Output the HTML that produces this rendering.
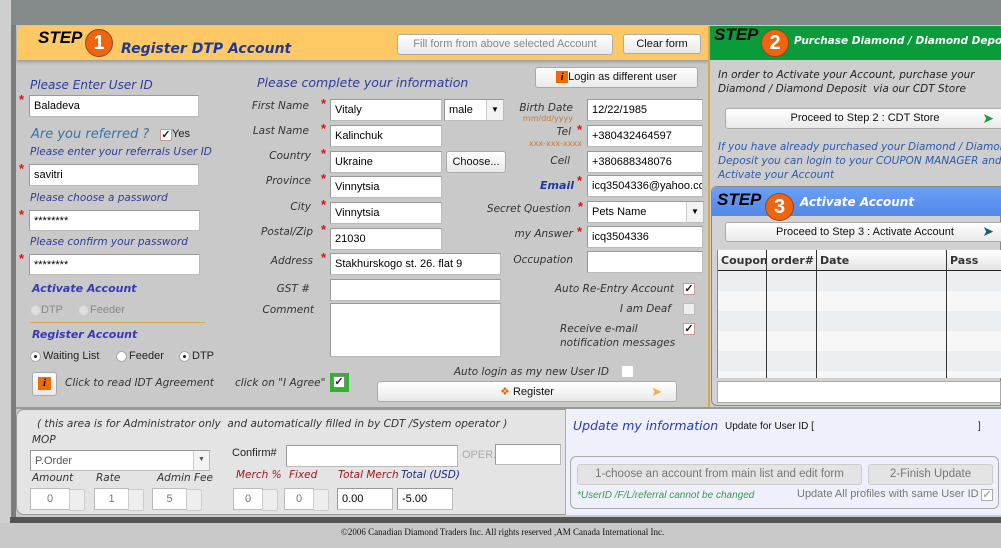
<!DOCTYPE html>
<html><head><meta charset="utf-8"><style>
*{box-sizing:border-box;margin:0;padding:0}
body{width:1001px;height:548px;position:relative;overflow:hidden;background:#c9c9c9;font-family:"Liberation Sans",sans-serif;font-size:11px;color:#222}
.a{position:absolute;white-space:nowrap}
.lb{position:absolute;white-space:nowrap;font-family:"DejaVu Sans",sans-serif;font-style:italic;font-size:10.5px;color:#333;text-align:right}
.in{position:absolute;background:#fff;border:1px solid #bbb;border-top-color:#999;border-left-color:#999;height:22px;font-size:11px;padding:4px 0 0 4px;color:#000;white-space:nowrap;overflow:hidden}
.st{position:absolute;color:#e01010;font-size:13px;font-weight:bold}
.btn{position:absolute;background:linear-gradient(#fff,#e9e9e9);border:1px solid #aaa;border-radius:3px;font-size:11px;text-align:center;padding-top:3px;color:#111;white-space:nowrap}
.bl{color:#2d3d9a;font-family:"DejaVu Sans",sans-serif;font-style:italic}
.cb{position:absolute;width:12px;height:12px;background:#fff;border:1px solid #c99;font-size:11px;line-height:10px;text-align:center;font-weight:bold;color:#222}
.rd{position:absolute;width:11px;height:11px;border-radius:50%;background:#fff;border:1px solid #aaa}
.rd.on::after{content:"";position:absolute;left:3px;top:3px;width:3px;height:3px;border-radius:50%;background:#222}
.circ{position:absolute;width:28px;height:28px;border-radius:50%;background:#f0640f;border:1px solid #8a4a20;color:#fff;font:bold 20px "Liberation Sans";text-align:center;line-height:27px}
.stp{position:absolute;font:italic bold 17px "Liberation Sans";color:#000}
.sp{position:absolute;width:28px;height:22px;background:#fff;border:1px solid #bbb;color:#777;text-align:center;padding-top:4px;font-size:11px}
.sp::after{content:"";position:absolute;right:-16px;top:0;width:14px;height:20px;background:#eee;border:1px solid #ccc;border-radius:2px}
</style></head><body>
<div class="a" style="left:0;top:0;width:1001px;height:25px;background:#858a8b"></div>
<div class="a" style="left:0;top:0;width:11px;height:548px;background:#cfcfcf"></div>
<div class="a" style="left:11px;top:25px;width:5px;height:498px;background:#7b7d7e"></div>
<div class="a" style="left:17px;top:26px;width:692px;height:34px;background:#fec965;border-radius:6px 0 0 0;box-shadow:0 2px 3px #999"></div>
<div class="stp" style="left:38px;top:28px">STEP</div>
<div class="circ" style="left:85px;top:29px">1</div>
<div class="a" style="left:121px;top:41px;font:italic bold 14px 'DejaVu Sans';color:#1d3a9a">Register DTP Account</div>
<div class="btn" style="left:397px;top:34px;width:216px;height:21px;color:#888">Fill form from above selected Account</div>
<div class="btn" style="left:623px;top:34px;width:78px;height:20px">Clear form</div>
<div class="a" style="left:708px;top:26px;width:2px;height:382px;background:#d8a850"></div>
<div class="a" style="left:710px;top:26px;width:291px;height:34px;background:#0a9b3a"></div>
<div class="stp" style="left:714px;top:25px">STEP</div>
<div class="circ" style="left:761px;top:29px">2</div>
<div class="a" style="left:794px;top:35px;font:italic bold 10.5px 'DejaVu Sans';color:#fff">Purchase Diamond / Diamond Deposit</div>
<div class="a" style="left:710px;top:60px;width:291px;height:348px;background:#cecece"></div>
<div class="a bl" style="left:30px;top:78px;font-size:12px">Please Enter User ID</div>
<div class="st" style="left:19px;top:92px">*</div>
<div class="in" style="left:29px;top:95px;width:170px">Baladeva</div>
<div class="a" style="left:31px;top:127px;font:italic 13px 'DejaVu Sans';color:#3a72a8">Are you referred ?</div>
<div class="cb" style="left:160px;top:129px">✓</div><div class="a" style="left:172px;top:128px">Yes</div>
<div class="a bl" style="left:30px;top:146px;font-size:10.5px">Please enter your referrals User ID</div>
<div class="st" style="left:19px;top:161px">*</div>
<div class="in" style="left:29px;top:164px;width:170px">savitri</div>
<div class="a bl" style="left:30px;top:192px;font-size:10.5px">Please choose a password</div>
<div class="st" style="left:19px;top:207px">*</div>
<div class="in" style="left:29px;top:210px;width:171px;height:21px">********</div>
<div class="a bl" style="left:30px;top:236px;font-size:10.5px">Please confirm your password</div>
<div class="st" style="left:19px;top:251px">*</div>
<div class="in" style="left:29px;top:254px;width:171px;height:21px">********</div>
<div class="a" style="left:32px;top:282px;font:italic bold 11px 'DejaVu Sans';color:#3838b8">Activate Account</div>
<div class="rd" style="left:30px;top:305px;background:#ddd;border-color:#ccc"></div><div class="a" style="left:41px;top:304px;color:#888">DTP</div>
<div class="rd" style="left:78px;top:305px;background:#ddd;border-color:#ccc"></div><div class="a" style="left:90px;top:304px;color:#888">Feeder</div>
<div class="a" style="left:30px;top:322px;width:175px;height:1px;background:#d8a850"></div>
<div class="a" style="left:32px;top:328px;font:italic bold 11px 'DejaVu Sans';color:#3838b8">Register Account</div>
<div class="rd on" style="left:30px;top:351px"></div><div class="a" style="left:43px;top:350px">Waiting List</div>
<div class="rd" style="left:116px;top:351px"></div><div class="a" style="left:129px;top:350px">Feeder</div>
<div class="rd on" style="left:179px;top:351px"></div><div class="a" style="left:192px;top:350px">DTP</div>
<div class="btn" style="left:32px;top:372px;width:25px;height:24px;padding-top:4px"><span style="display:inline-block;width:13px;height:13px;background:#f06a00;color:#000;font:italic bold 11px 'Liberation Serif';line-height:13px">i</span></div>
<div class="lb" style="left:65px;top:377px">Click to read IDT Agreement</div>
<div class="lb" style="left:235px;top:377px">click on "I Agree"</div>
<div class="a" style="left:330px;top:373px;width:19px;height:19px;background:#2db52d"></div>
<div class="cb" style="left:333px;top:376px;border-color:#888">✓</div>
<div class="a bl" style="left:257px;top:75px;font-size:12.5px">Please complete your information</div>
<div class="lb" style="right:692px;top:100px">First Name</div><div class="st" style="left:321px;top:96px">*</div><div class="in" style="left:330px;top:99px;width:112px">Vitaly</div>
<div class="in" style="left:444px;top:99px;width:60px">male<span style="position:absolute;right:0;top:0;width:17px;height:20px;background:#f3f3f3;border-left:1px solid #ccc;font-size:8px;text-align:center;padding-top:5px">▼</span></div>
<div class="lb" style="right:692px;top:125px">Last Name</div><div class="st" style="left:321px;top:121px">*</div><div class="in" style="left:330px;top:125px;width:112px">Kalinchuk</div>
<div class="lb" style="right:690px;top:150px">Country</div><div class="st" style="left:321px;top:146px">*</div><div class="in" style="left:330px;top:151px;width:112px">Ukraine</div>
<div class="btn" style="left:446px;top:151px;width:60px;height:22px;padding-top:4px">Choose...</div>
<div class="lb" style="right:690px;top:175px">Province</div><div class="st" style="left:321px;top:171px">*</div><div class="in" style="left:330px;top:176px;width:112px">Vinnytsia</div>
<div class="lb" style="right:690px;top:201px">City</div><div class="st" style="left:321px;top:197px">*</div><div class="in" style="left:330px;top:202px;width:112px">Vinnytsia</div>
<div class="lb" style="right:688px;top:226px">Postal/Zip</div><div class="st" style="left:321px;top:222px">*</div><div class="in" style="left:330px;top:228px;width:112px">21030</div>
<div class="lb" style="right:688px;top:255px">Address</div><div class="st" style="left:321px;top:250px">*</div><div class="in" style="left:330px;top:253px;width:171px">Stakhurskogo st. 26. flat 9</div>
<div class="lb" style="right:691px;top:283px">GST #</div><div class="in" style="left:330px;top:279px;width:171px"></div>
<div class="lb" style="right:687px;top:304px">Comment</div><div class="in" style="left:330px;top:303px;width:171px;height:54px"></div>
<div class="lb" style="right:392px;top:366px">Auto login as my new User ID</div>
<div class="a" style="left:622px;top:366px;width:11px;height:11px;background:#fff"></div>
<div class="btn" style="left:377px;top:381px;width:300px;height:21px"><span style="color:#e86a10">❖</span> Register<span style="position:absolute;right:14px;top:2px;color:#f0b040;font-size:13px">➤</span></div>
<div class="btn" style="left:535px;top:67px;width:163px;height:21px"><span style="display:inline-block;width:12px;height:12px;background:#f06a00;font:italic bold 11px 'Liberation Serif';line-height:12px">i</span>Login as different user</div>
<div class="lb" style="right:428px;top:102px">Birth Date</div>
<div class="a" style="right:428px;top:114px;font-size:8px;color:#c87830;font-family:'DejaVu Sans'">mm/dd/yyyy</div>
<div class="in" style="left:587px;top:99px;width:116px">12/22/1985</div>
<div class="lb" style="right:430px;top:126px">Tel</div><div class="st" style="left:577px;top:122px">*</div>
<div class="a" style="right:419px;top:139px;font-size:8px;color:#c87830;font-family:'DejaVu Sans'">xxx-xxx-xxxx</div>
<div class="in" style="left:587px;top:125px;width:116px">+380432464597</div>
<div class="lb" style="right:431px;top:155px">Cell</div><div class="in" style="left:587px;top:151px;width:116px">+380688348076</div>
<div class="a" style="right:427px;top:179px;font:italic bold 11px 'DejaVu Sans';color:#1d3a9a">Email</div><div class="st" style="left:577px;top:173px">*</div>
<div class="in" style="left:587px;top:175px;width:116px">icq3504336@yahoo.com</div>
<div class="lb" style="right:430px;top:203px">Secret Question</div><div class="st" style="left:578px;top:199px">*</div>
<div class="in" style="left:587px;top:201px;width:117px">Pets Name<span style="position:absolute;right:0;top:0;width:17px;height:20px;background:#f3f3f3;border-left:1px solid #ccc;font-size:8px;text-align:center;padding-top:5px">▼</span></div>
<div class="lb" style="right:428px;top:228px">my Answer</div><div class="st" style="left:577px;top:224px">*</div>
<div class="in" style="left:587px;top:226px;width:116px">icq3504336</div>
<div class="lb" style="right:428px;top:254px">Occupation</div><div class="in" style="left:587px;top:251px;width:116px"></div>
<div class="lb" style="right:327px;top:283px">Auto Re-Entry Account</div><div class="cb" style="left:683px;top:283px">✓</div>
<div class="lb" style="right:330px;top:303px">I am Deaf</div><div class="cb" style="left:683px;top:303px;border-color:#bbb;background:#eee"></div>
<div class="lb" style="left:560px;top:322px;text-align:left;line-height:14px">Receive e-mail<br>notification messages</div><div class="cb" style="left:683px;top:323px">✓</div>
<div class="lb" style="left:718px;top:68px;text-align:left;line-height:14px;color:#222">In order to Activate your Account, purchase your<br>Diamond / Diamond Deposit &nbsp;via our CDT Store</div>
<div class="btn" style="left:725px;top:108px;width:280px;height:21px">Proceed to Step 2 : CDT Store<span style="position:absolute;right:10px;top:1px;color:#1a9a3a;font-size:14px">➤</span></div>
<div class="lb" style="left:718px;top:140px;text-align:left;line-height:14px;color:#2a5ab0">If you have already purchased your Diamond / Diamond<br>Deposit you can login to your COUPON MANAGER and<br>Activate your Account</div>
<div class="a" style="left:711px;top:186px;width:290px;height:220px;background:#d2d2d2;border:1px solid #888;border-radius:6px 0 0 6px"></div>
<div class="a" style="left:712px;top:187px;width:289px;height:29px;background:linear-gradient(#6aa0f8,#5288e8);border-radius:6px 0 0 0"></div>
<div class="stp" style="left:717px;top:190px">STEP</div>
<div class="circ" style="left:765px;top:193px;width:29px">3</div>
<div class="a" style="left:800px;top:195px;font:italic bold 12px 'DejaVu Sans';color:#fff">Activate Account</div>
<div class="btn" style="left:725px;top:222px;width:280px;height:20px">Proceed to Step 3 : Activate Account<span style="position:absolute;right:10px;top:0;color:#1a5a8a;font-size:14px">➤</span></div>
<div class="a" style="left:717px;top:250px;width:284px;height:128px;background:repeating-linear-gradient(#eceff2 0 20px,#f7f7f7 20px 40px);background-position:0 21px;border-left:1px solid #888"></div>
<div class="a" style="left:718px;top:250px;width:283px;height:21px;background:linear-gradient(#fff,#e4e4e4);border-bottom:1px solid #222"></div>
<div class="a" style="left:721px;top:254px;font:bold 11px 'DejaVu Sans';color:#333">Coupon</div>
<div class="a" style="left:771px;top:254px;font:bold 11px 'DejaVu Sans';color:#333">order#</div>
<div class="a" style="left:820px;top:254px;font:bold 11px 'DejaVu Sans';color:#333">Date</div>
<div class="a" style="left:950px;top:254px;font:bold 11px 'DejaVu Sans';color:#333">Pass</div>
<div class="a" style="left:766px;top:250px;width:1px;height:128px;background:#333"></div>
<div class="a" style="left:816px;top:250px;width:1px;height:128px;background:#333"></div>
<div class="a" style="left:946px;top:250px;width:1px;height:128px;background:#333"></div>
<div class="a" style="left:717px;top:381px;width:284px;height:22px;background:#fff;border:1px solid #aaa"></div>
<div class="a" style="left:16px;top:407px;width:985px;height:2px;background:#999"></div>
<div class="a" style="left:16px;top:409px;width:550px;height:106px;background:#e4e4e4;border:1px solid #999;border-radius:8px 0 0 8px"></div>
<div class="a" style="left:565px;top:409px;width:436px;height:106px;background:#eef0fb;border-left:1px solid #d8a850"></div>
<div class="lb" style="left:37px;top:418px;text-align:left">( this area is for Administrator only &nbsp;and automatically filled in by CDT /System operator )</div>
<div class="lb" style="left:32px;top:434px;text-align:left">MOP</div>
<div class="in" style="left:30px;top:450px;width:180px;height:21px;color:#555">P.Order<span style="position:absolute;right:0;top:0;width:16px;height:19px;background:#f3f3f3;border-left:1px solid #ccc;font-size:7px;text-align:center;padding-top:5px">▼</span></div>
<div class="lb" style="left:32px;top:472px;text-align:left">Amount</div>
<div class="lb" style="left:96px;top:472px;text-align:left">Rate</div>
<div class="lb" style="left:157px;top:472px;text-align:left">Admin Fee</div>
<div class="sp" style="left:30px;top:488px;width:40px">0</div>
<div class="sp" style="left:94px;top:488px;width:35px">1</div>
<div class="sp" style="left:152px;top:488px;width:35px">5</div>
<div class="a" style="left:232px;top:447px;font-size:11px">Confirm#</div>
<div class="in" style="left:286px;top:445px;width:172px;height:22px"></div>
<div class="a" style="left:462px;top:449px;color:#aaa">OPER.</div>
<div class="in" style="left:495px;top:444px;width:66px;height:21px"></div>
<div class="lb" style="left:236px;top:469px;text-align:left;color:#a01820">Merch %</div>
<div class="lb" style="left:289px;top:469px;text-align:left;color:#a01820">Fixed</div>
<div class="lb" style="left:338px;top:469px;text-align:left;color:#a01820">Total Merch</div>
<div class="lb" style="left:401px;top:469px;text-align:left;color:#1d2a8a">Total (USD)</div>
<div class="sp" style="left:233px;top:488px;width:30px">0</div>
<div class="sp" style="left:284px;top:488px;width:30px">0</div>
<div class="in" style="left:337px;top:488px;width:56px;height:22px">0.00</div>
<div class="in" style="left:397px;top:488px;width:56px;height:22px">-5.00</div>
<div class="a" style="left:573px;top:418px;font:italic 12.5px 'DejaVu Sans';color:#2a3ab8">Update my information</div>
<div class="a" style="left:725px;top:421px;font-size:10px;color:#111">Update for User ID [</div>
<div class="a" style="left:978px;top:421px;font-size:10px">]</div>
<div class="a" style="left:570px;top:456px;width:429px;height:53px;border:1px solid #aaa;border-radius:6px"></div>
<div class="btn" style="left:577px;top:464px;width:285px;height:21px;color:#777;background:#e4e4e4;border-color:#ccc;font-size:11.5px">1-choose an account from main list and edit form</div>
<div class="btn" style="left:868px;top:464px;width:125px;height:21px;color:#777;background:#e4e4e4;border-color:#ccc;font-size:11.5px">2-Finish Update</div>
<div class="a" style="left:577px;top:490px;font:italic 10px 'Liberation Sans';color:#3a9a4a">*UserID /F/L/referral cannot be changed</div>
<div class="a" style="left:797px;top:488px;color:#777;font-size:11px">Update All profiles with same User ID</div>
<div class="cb" style="left:981px;top:489px;border-color:#aaa;color:#aaa">✓</div>
<div class="a" style="left:10px;top:517px;width:991px;height:6px;background:#555"></div>
<div class="a" style="left:0;top:523px;width:1001px;height:25px;background:#c9c9c9"></div>
<div class="a" style="left:341px;top:527px;font:9px 'Liberation Serif';color:#111">©2006 Canadian Diamond Traders Inc. All rights reserved ,AM Canada International Inc.</div>
</body></html>
